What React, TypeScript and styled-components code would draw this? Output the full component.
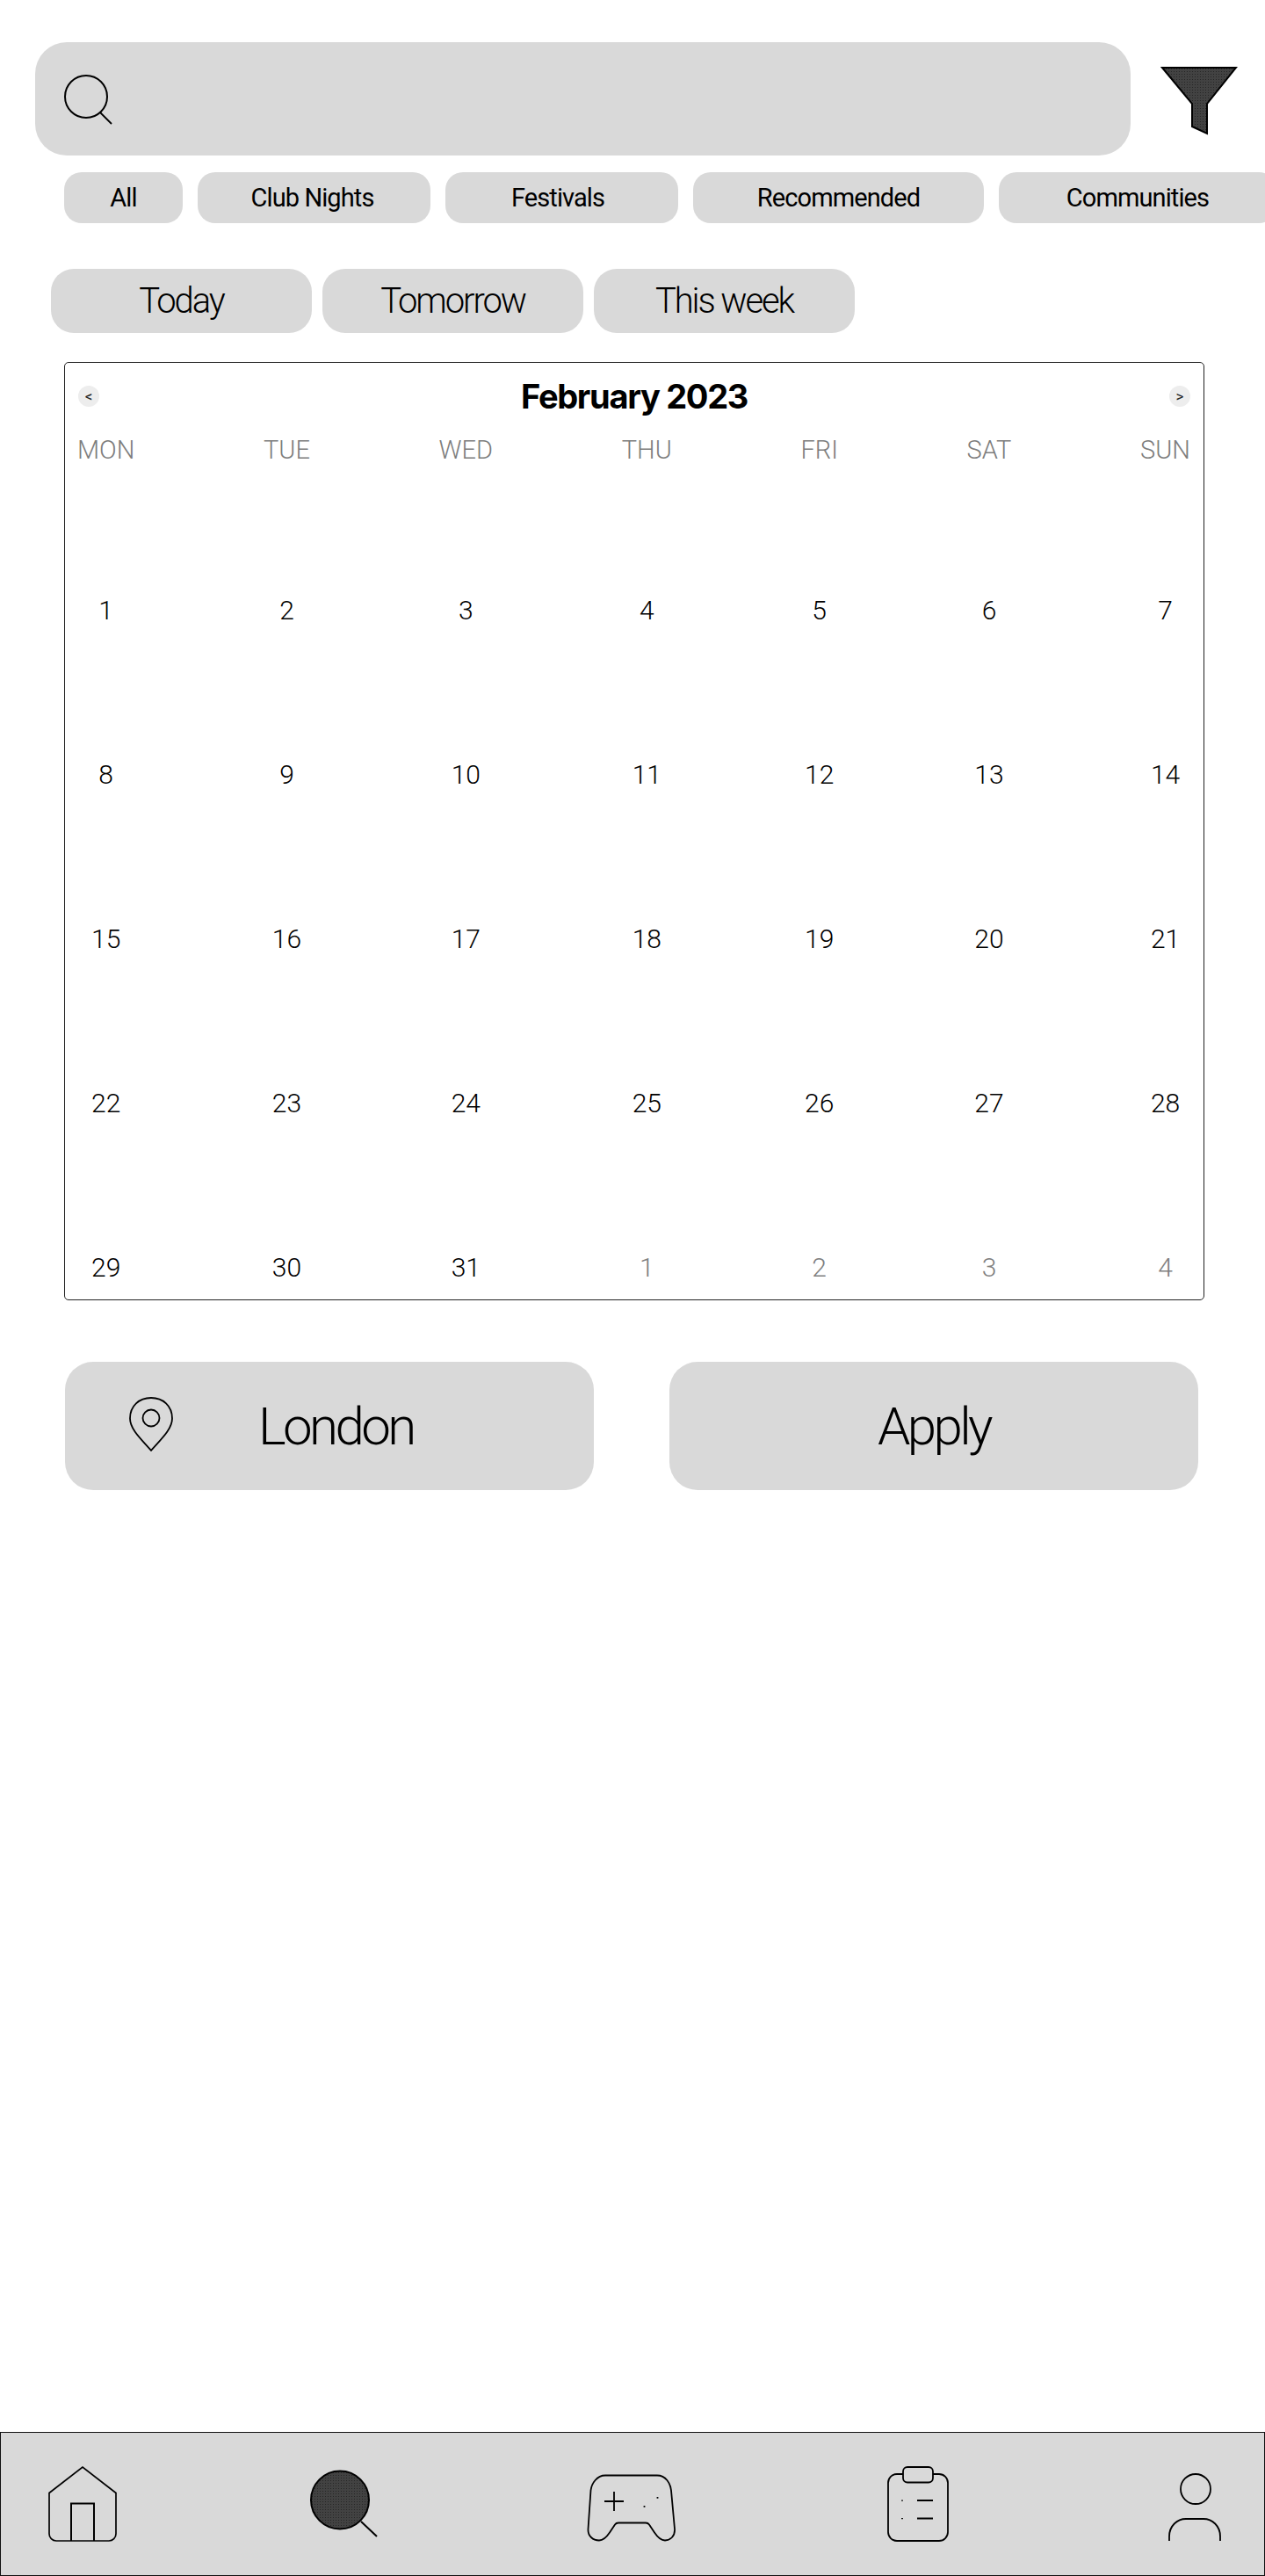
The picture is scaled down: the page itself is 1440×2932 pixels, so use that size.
import styled, { createGlobalStyle } from "styled-components";

const GlobalStyle = createGlobalStyle`
    html, body {
        margin: 0;
        padding: 0;
        background: #fff;
    }
    body {
        font-family: "Roboto", "Liberation Sans", sans-serif;
        overflow-x: hidden;
    }
`;

// $nudge: the labels aren't quite centred in some of the chips
const CHIPS = [
    { label: "All", width: 135, nudge: 0 },
    { label: "Club Nights", width: 265, nudge: 4 },
    { label: "Festivals", width: 265, nudge: 9 },
    { label: "Recommended", width: 331, nudge: 0 },
    { label: "Communities", width: 316, nudge: 0 },
];

const DAYS = ["MON", "TUE", "WED", "THU", "FRI", "SAT", "SUN"];

const WEEKS = [
    [1, 2, 3, 4, 5, 6, 7],
    [8, 9, 10, 11, 12, 13, 14],
    [15, 16, 17, 18, 19, 20, 21],
    [22, 23, 24, 25, 26, 27, 28],
    [29, 30, 31, 1, 2, 3, 4],
];

const Stipple = ({ id }: { id: string }) => (
    <defs>
        <pattern id={id} width="3" height="3" patternUnits="userSpaceOnUse">
            <rect width="3" height="3" fill="#424242" stroke="none" />
            <rect width="1" height="1" fill="#262626" stroke="none" />
        </pattern>
    </defs>
);

const SearchIcon = () => (
    <svg width="58" height="60" viewBox="0 0 58 60" fill="none" stroke="#000" strokeWidth="2">
        <circle cx="25" cy="25" r="24" />
        <path d="M41 43l13 13" strokeWidth="1.8" />
    </svg>
);

const FilterIcon = () => (
    <svg width="88" height="80" viewBox="0 0 88 80" stroke="#000" strokeWidth="2">
        <Stipple id="funnel" />
        <path d="M2 2h84L53 43v34l-17-8V43z" fill="url(#funnel)" />
    </svg>
);

const PinIcon = () => (
    <svg width="50" height="62" viewBox="0 0 50 62" fill="none" stroke="#000" strokeWidth="1.8">
        <path d="M25 61C17 51 1 38 1 24.500C1 10 11.500 1 25 1s24 9 24 23.500C49 38 33 51 25 61z" />
        <circle cx="25" cy="24" r="9.500" />
    </svg>
);

const HomeIcon = () => (
    <svg width="78" height="90" viewBox="0 0 78 90" fill="none" stroke="#000" strokeWidth="1.700">
        <path d="M1 32.500L39 3l38 29.500V79a8 8 0 0 1-8 8H9a8 8 0 0 1-8-8z" />
        <path d="M26 87V44.500h26V87" strokeWidth="2" />
    </svg>
);

const SearchFilledIcon = () => (
    <svg width="78" height="90" viewBox="0 0 78 90" stroke="#000" strokeWidth="2">
        <Stipple id="lens" />
        <circle cx="35" cy="40.500" r="33" fill="url(#lens)" />
        <path d="M59 65l18 17" fill="none" />
    </svg>
);

const PadIcon = () => (
    <svg width="102" height="90" viewBox="0 0 102 90" fill="none" stroke="#000" strokeWidth="1.800">
        <path d="M21 12.500h59c10 0 15 9 16 17l4 44c.600 8-5 13-11 13-5 0-8-3-12-9l-6-9c-1-1.500-2-2-4-2H36c-2 0-3 .500-4 2l-6 9c-4 6-7 9-12 9-7 0-13-5-12.500-13l3-44c1-8 7-17 16.500-17z" />
        <path d="M31 31v22M20 42h22" />
        <path d="M65.500 47v1.800M80.500 37v1.800" />
    </svg>
);

const ClipboardIcon = () => (
    <svg width="70" height="90" viewBox="0 0 70 90" fill="none" stroke="#000" strokeWidth="1.800">
        <path d="M18 11h-7a10 10 0 0 0-10 10v56a10 10 0 0 0 10 10h48a10 10 0 0 0 10-10V21a10 10 0 0 0-10-10h-7" />
        <rect x="18" y="3" width="34" height="17.500" rx="5" />
        <path d="M34 41h18M34 61.500h18" strokeWidth="2" />
        <path d="M17 40.500v1.200M17 61v1.200" />
    </svg>
);

const PersonIcon = () => (
    <svg width="60" height="90" viewBox="0 0 60 90" fill="none" stroke="#000" strokeWidth="1.800">
        <circle cx="31" cy="28" r="17" />
        <path d="M1 87V82c0-12 9-20 19-20h20c10 0 19 8 19 20v5" />
    </svg>
);

const App = () => (
    <Page>
        <GlobalStyle />
        <SearchRow>
            <SearchBar>
                <SearchIcon />
            </SearchBar>
            <FilterButton>
                <FilterIcon />
            </FilterButton>
        </SearchRow>
        <ChipRow>
            {CHIPS.map(chip => (
                <Chip key={chip.label} $width={chip.width} $nudge={chip.nudge}>{chip.label}</Chip>
            ))}
        </ChipRow>
        <DateRow>
            <DatePill>Today</DatePill>
            <DatePill>Tomorrow</DatePill>
            <DatePill>This week</DatePill>
        </DateRow>
        <Calendar>
            <CalendarHead>
                <MonthArrow>&lt;</MonthArrow>
                <MonthTitle>February 2023</MonthTitle>
                <MonthArrow>&gt;</MonthArrow>
            </CalendarHead>
            <DayColumns>
                {DAYS.map((day, col) => (
                    <DayColumn key={day}>
                        <DayName>{day}</DayName>
                        {WEEKS.map((week, row) => (
                            <DayCell key={row} $muted={row === 4 && col > 2}>{week[col]}</DayCell>
                        ))}
                    </DayColumn>
                ))}
            </DayColumns>
        </Calendar>
        <ActionRow>
            <LocationButton>
                <PinIcon />
                <span>London</span>
            </LocationButton>
            <ApplyButton>Apply</ApplyButton>
        </ActionRow>
        <BottomNav>
            <HomeIcon />
            <NavSlot $gap={219}><SearchFilledIcon /></NavSlot>
            <NavSlot $gap={238}><PadIcon /></NavSlot>
            <NavSlot $gap={240}><ClipboardIcon /></NavSlot>
            <NavSlot $gap={250}><PersonIcon /></NavSlot>
        </BottomNav>
    </Page>
);

export default App;

const Page = styled.div`
    display: flex;
    flex-direction: column;
    width: 1440px;
    min-height: 2932px;
    overflow: hidden;
    color: #000;
`;

const SearchRow = styled.div`
    display: flex;
    align-items: flex-start;
    padding: 48px 0 0 40px;
`;

const SearchBar = styled.div`
    display: flex;
    align-items: center;
    width: 1247px;
    height: 129px;
    padding: 4px 0 0 33px;
    box-sizing: border-box;
    border-radius: 36px;
    background: #d9d9d9;
`;

const FilterButton = styled.div`
    display: flex;
    margin: 27px 0 0 34px;
`;

const ChipRow = styled.div`
    display: flex;
    align-items: center;
    gap: 17px;
    height: 60px;
    margin-top: 18px;
    padding-left: 73px;
`;

const Chip = styled.div<{ $width: number; $nudge: number }>`
    flex: none;
    display: flex;
    align-items: center;
    justify-content: center;
    width: ${({ $width }) => $width}px;
    height: 58px;
    padding-right: ${({ $nudge }) => $nudge}px;
    box-sizing: border-box;
    border-radius: 20px;
    background: #d9d9d9;
    font-size: 29px;
    font-weight: 400;
    letter-spacing: -0.9px;
`;

const DateRow = styled.div`
    display: flex;
    gap: 12px;
    margin-top: 51px;
    padding-left: 58px;
`;

const DatePill = styled.div`
    display: flex;
    align-items: center;
    justify-content: center;
    width: 297px;
    height: 73px;
    border-radius: 26px;
    background: #d9d9d9;
    font-size: 40px;
    font-weight: 300;
    letter-spacing: -2.1px;
`;

const Calendar = styled.div`
    width: 1298px;
    height: 1068px;
    margin: 33px 0 0 73px;
    box-sizing: border-box;
    border: 1.5px solid #222;
    border-radius: 5px;
    overflow: hidden;
`;

const CalendarHead = styled.div`
    display: flex;
    align-items: center;
    justify-content: space-between;
    height: 76px;
    padding: 0 15px;
`;

const MonthArrow = styled.div`
    display: flex;
    align-items: center;
    justify-content: center;
    width: 24px;
    height: 24px;
    border-radius: 50%;
    background: #ededed;
    font-size: 17px;
    line-height: 1;
    color: #222;
`;

const MonthTitle = styled.div`
    font-family: "Inter", "Roboto", sans-serif;
    font-size: 38px;
    font-weight: 700;
    letter-spacing: -1.3px;
`;

const DayColumns = styled.div`
    display: flex;
    justify-content: space-between;
    padding: 0 15px 0 14px;
`;

const DayColumn = styled.div`
    display: flex;
    flex-direction: column;
    align-items: center;
`;

const DayName = styled.div`
    height: 46px;
    margin-bottom: 66px;
    font-size: 29px;
    font-weight: 300;
    line-height: 46px;
    color: #7d7d7d;
`;

const DayCell = styled.div<{ $muted: boolean }>`
    flex: none;
    height: 187px;
    font-size: 30px;
    font-weight: 300;
    line-height: 187px;
    color: ${({ $muted }) => ($muted ? "#808080" : "#000")};
`;

const ActionRow = styled.div`
    display: flex;
    gap: 86px;
    margin-top: 70px;
    padding-left: 74px;
`;

const ActionBase = styled.div`
    display: flex;
    align-items: center;
    width: 602px;
    height: 146px;
    border-radius: 32px;
    background: #d9d9d9;
    font-size: 60px;
    font-weight: 300;
    letter-spacing: -3.6px;
`;

const LocationButton = styled(ActionBase)`
    gap: 97px;
    padding-left: 73px;
    box-sizing: border-box;
    svg {
        margin-top: -4px;
    }
`;

const ApplyButton = styled(ActionBase)`
    justify-content: center;
`;

const BottomNav = styled.nav`
    display: flex;
    align-items: center;
    height: 164px;
    margin-top: auto;
    padding-left: 54px;
    box-sizing: border-box;
    border: 1.5px solid #111;
    background: #d9d9d9;
`;

const NavSlot = styled.div<{ $gap: number }>`
    display: flex;
    margin-left: ${({ $gap }) => $gap}px;
`;
